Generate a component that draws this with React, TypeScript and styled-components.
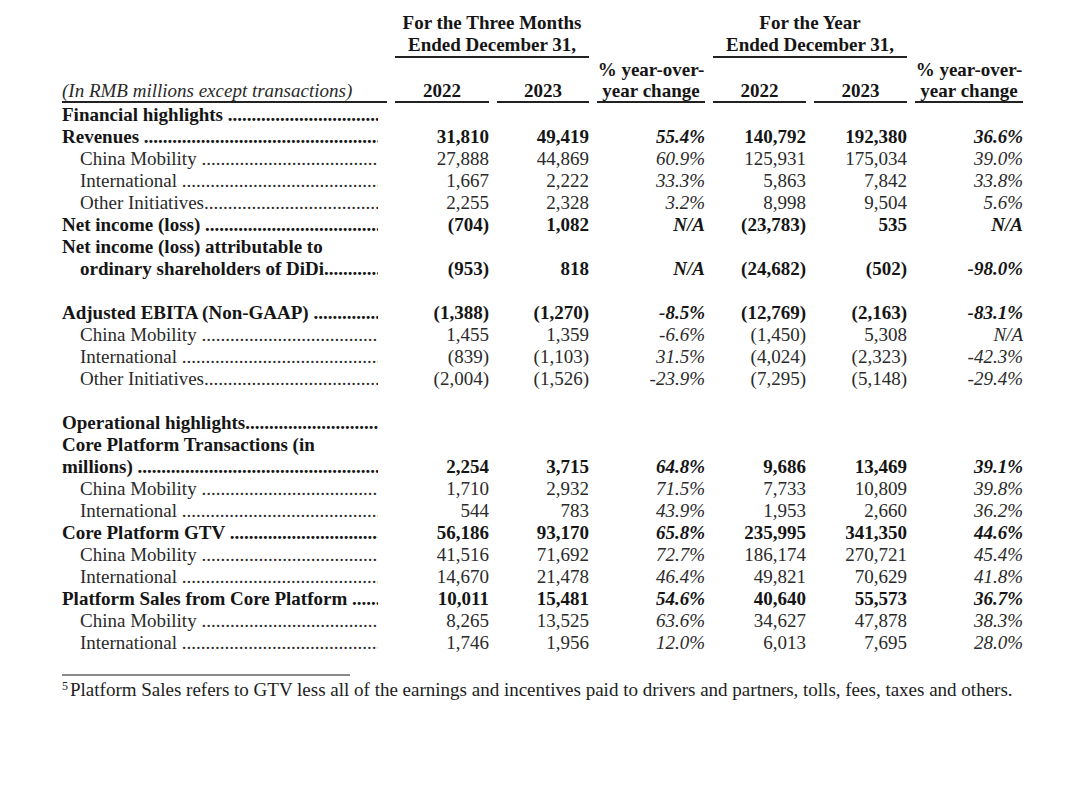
import React from "react";
import styled, { createGlobalStyle } from "styled-components";

const Global = createGlobalStyle`
  html, body { margin: 0; padding: 0; background: #fff; }
  body { font-family: "Liberation Serif", "Times New Roman", serif; color: #1c1c1c; }
`;

const COLS = "325px 94px 92px 108px 93px 93px 108px";

const Page = styled.div`
  width: 1080px;
  height: 805px;
  box-sizing: border-box;
  padding: 12px 0 0 62px;
  background: #fff;
`;

const HeadRow = styled.div<{ $gapTop?: number }>`
  display: grid;
  grid-template-columns: ${COLS};
  column-gap: 8px;
  margin-top: ${(p) => p.$gapTop ?? 0}px;
  font-size: 19px;
  font-weight: bold;
  color: #151515;
`;

const GroupHead = styled.div<{ $col: string }>`
  grid-column: ${(p) => p.$col};
  text-align: center;
  line-height: 22px;
  border-bottom: 2px solid #222;
`;

const ColHead = styled.div<{ $italic?: boolean; $left?: boolean }>`
  align-self: end;
  text-align: ${(p) => (p.$left ? "left" : "center")};
  font-style: ${(p) => (p.$italic ? "italic" : "normal")};
  font-weight: ${(p) => (p.$italic ? "normal" : "bold")};
  color: ${(p) => (p.$italic ? "#2a2a2a" : "#151515")};
  line-height: 21px;
  white-space: nowrap;
  border-bottom: 2px solid #222;
`;

const Body = styled.div`
  margin-top: 1px;
`;

const Row = styled.div`
  display: grid;
  grid-template-columns: ${COLS};
  column-gap: 8px;
  height: 22px;
  font-size: 19px;
  line-height: 22px;
`;

const Label = styled.div<{ $bold?: boolean; $indent?: boolean }>`
  display: flex;
  min-width: 0;
  padding-left: ${(p) => (p.$indent ? "18px" : "0")};
  padding-right: 9px;
  font-weight: ${(p) => (p.$bold ? "bold" : "normal")};
  color: ${(p) => (p.$bold ? "#151515" : "#2a2a2a")};
  white-space: pre;
`;

const Leader = styled.span`
  flex: 1;
  overflow: hidden;
  white-space: nowrap;
  &::after {
    content: "................................................................................................................................";
  }
`;

const Num = styled.div<{ $bold?: boolean; $italic?: boolean }>`
  text-align: right;
  white-space: nowrap;
  font-weight: ${(p) => (p.$bold ? "bold" : "normal")};
  font-style: ${(p) => (p.$italic ? "italic" : "normal")};
  color: ${(p) => (p.$bold ? "#151515" : "#2a2a2a")};
`;

const Rule = styled.div`
  width: 288px;
  margin-top: 20px;
  border-top: 2px solid #8a8a8a;
`;

const Footnote = styled.div`
  margin-top: 4px;
  font-size: 19px;
  line-height: 20px;
  color: #1c1c1c;
  white-space: nowrap;
`;

const Sup = styled.sup`
  font-size: 12px;
  vertical-align: top;
  line-height: 12px;
  margin-right: 2px;
`;

type R = {
  label: string;
  bold?: boolean;
  indent?: boolean;
  dots?: boolean;
  v?: string[];
  blank?: boolean;
};

const rows: R[] = [
  { label: "Financial highlights ", bold: true, dots: true },
  { label: "Revenues ", bold: true, dots: true, v: ["31,810", "49,419", "55.4%", "140,792", "192,380", "36.6%"] },
  { label: "China Mobility ", indent: true, dots: true, v: ["27,888", "44,869", "60.9%", "125,931", "175,034", "39.0%"] },
  { label: "International ", indent: true, dots: true, v: ["1,667", "2,222", "33.3%", "5,863", "7,842", "33.8%"] },
  { label: "Other Initiatives", indent: true, dots: true, v: ["2,255", "2,328", "3.2%", "8,998", "9,504", "5.6%"] },
  { label: "Net income (loss) ", bold: true, dots: true, v: ["(704)", "1,082", "N/A", "(23,783)", "535", "N/A"] },
  { label: "Net income (loss) attributable to", bold: true },
  { label: "ordinary shareholders of DiDi", bold: true, indent: true, dots: true, v: ["(953)", "818", "N/A", "(24,682)", "(502)", "-98.0%"] },
  { label: "", blank: true },
  { label: "Adjusted EBITA (Non-GAAP) ", bold: true, dots: true, v: ["(1,388)", "(1,270)", "-8.5%", "(12,769)", "(2,163)", "-83.1%"] },
  { label: "China Mobility ", indent: true, dots: true, v: ["1,455", "1,359", "-6.6%", "(1,450)", "5,308", "N/A"] },
  { label: "International ", indent: true, dots: true, v: ["(839)", "(1,103)", "31.5%", "(4,024)", "(2,323)", "-42.3%"] },
  { label: "Other Initiatives", indent: true, dots: true, v: ["(2,004)", "(1,526)", "-23.9%", "(7,295)", "(5,148)", "-29.4%"] },
  { label: "", blank: true },
  { label: "Operational highlights", bold: true, dots: true },
  { label: "Core Platform Transactions (in", bold: true },
  { label: "millions) ", bold: true, dots: true, v: ["2,254", "3,715", "64.8%", "9,686", "13,469", "39.1%"] },
  { label: "China Mobility ", indent: true, dots: true, v: ["1,710", "2,932", "71.5%", "7,733", "10,809", "39.8%"] },
  { label: "International ", indent: true, dots: true, v: ["544", "783", "43.9%", "1,953", "2,660", "36.2%"] },
  { label: "Core Platform GTV ", bold: true, dots: true, v: ["56,186", "93,170", "65.8%", "235,995", "341,350", "44.6%"] },
  { label: "China Mobility ", indent: true, dots: true, v: ["41,516", "71,692", "72.7%", "186,174", "270,721", "45.4%"] },
  { label: "International ", indent: true, dots: true, v: ["14,670", "21,478", "46.4%", "49,821", "70,629", "41.8%"] },
  { label: "Platform Sales from Core Platform ", bold: true, dots: true, v: ["10,011", "15,481", "54.6%", "40,640", "55,573", "36.7%"] },
  { label: "China Mobility ", indent: true, dots: true, v: ["8,265", "13,525", "63.6%", "34,627", "47,878", "38.3%"] },
  { label: "International ", indent: true, dots: true, v: ["1,746", "1,956", "12.0%", "6,013", "7,695", "28.0%"] },
];

const PCT = [2, 5];

export default function App() {
  return (
    <Page>
      <Global />
      <HeadRow>
        <GroupHead $col="2 / 4">
          For the Three Months
          <br />
          Ended December 31,
        </GroupHead>
        <GroupHead $col="5 / 7">
          For the Year
          <br />
          Ended December 31,
        </GroupHead>
      </HeadRow>
      <HeadRow $gapTop={1}>
        <ColHead $italic $left>
          (In RMB millions except transactions)
        </ColHead>
        <ColHead>2022</ColHead>
        <ColHead>2023</ColHead>
        <ColHead>
          % year-over-
          <br />
          year change
        </ColHead>
        <ColHead>2022</ColHead>
        <ColHead>2023</ColHead>
        <ColHead>
          % year-over-
          <br />
          year change
        </ColHead>
      </HeadRow>
      <Body>
        {rows.map((r, i) => (
          <Row key={i}>
            <Label $bold={r.bold} $indent={r.indent}>
              {r.label}
              {r.dots && <Leader />}
            </Label>
            {r.v &&
              r.v.map((val, j) => (
                <Num key={j} $bold={r.bold} $italic={PCT.includes(j)}>
                  {val}
                </Num>
              ))}
          </Row>
        ))}
      </Body>
      <Rule />
      <Footnote>
        <Sup>5</Sup>
        Platform Sales refers to GTV less all of the earnings and incentives paid to drivers and partners, tolls, fees, taxes and others.
      </Footnote>
    </Page>
  );
}
